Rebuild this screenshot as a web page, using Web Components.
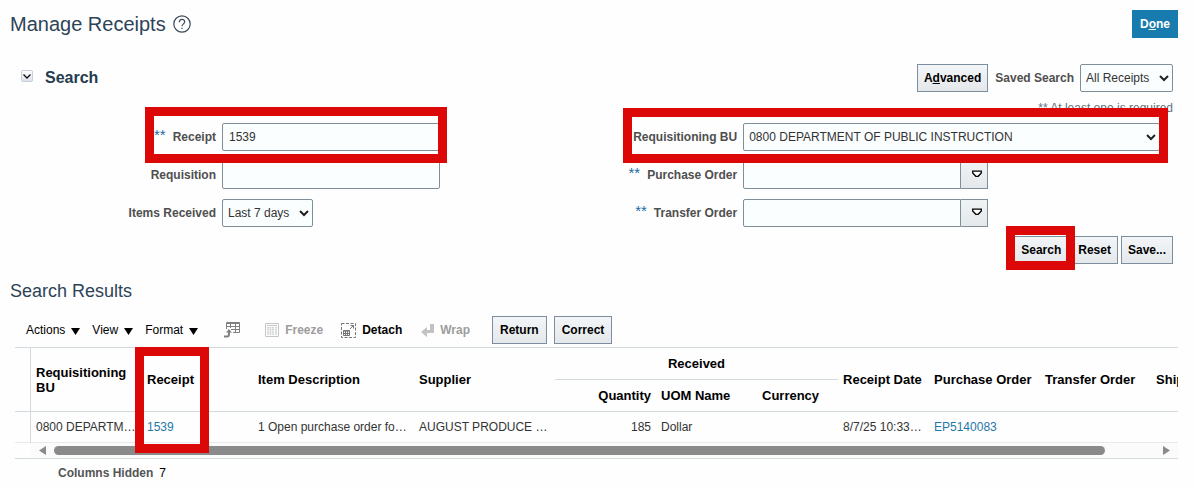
<!DOCTYPE html>
<html lang="en">
<head>
	<meta charset="utf-8">
	<meta name="viewport" content="width=device-width, initial-scale=1">
	<title>Manage Receipts</title>
	<style>
		body {
			margin: 0;
			background: #fefefe;
			color: #333;
			font: 12px/16px "Liberation Sans", Arial, sans-serif;
		}
	</style>
</head>
<body>
	<receipts-page></receipts-page>

	<script>
		class BaseElement extends HTMLElement {

			constructor() {
				super();
				this.attachShadow({mode: 'open'});
			};

			connectedCallback() {
				this.shadowRoot.innerHTML = `
					<style>
						* {
							box-sizing: border-box;
						}

						svg {
							display: block;
							flex: none;
						}

						${this.style()}
					</style>
					${this.render()}
				`;
			};

			attr(name) {
				return this.getAttribute(name) || '';
			};
		};

		// Red frame drawn over whatever is slotted in
		class HighlightBox extends BaseElement {

			style() {
				return `
					:host {
						display: block;
						position: relative;
					}

					div {
						position: absolute;
						inset: var(--frame, -8px);
						border: 9px solid #dc0808;
						pointer-events: none;
						z-index: 2;
					}
				`;
			};

			render() {
				return `<slot></slot><div></div>`;
			};
		};

		class ActionButton extends BaseElement {

			style() {
				return `
					:host {
						display: block;
						--pad: 6px;
					}

					:host([wide]) {
						--pad: 7px;
					}

					button {
						display: block;
						height: 28px;
						padding: 0 var(--pad);
						border: 1px solid #7b8fa0;
						border-radius: 0;
						background: linear-gradient(#f3f5f7, #e4e8ea);
						color: #000;
						font: bold 12px/16px "Liberation Sans", Arial, sans-serif;
						white-space: nowrap;
					}

					:host([primary]) button {
						border-color: #177cad;
						background: #177cad;
						color: #fff;
					}
				`;
			};

			render() {
				return `<button type="button"><slot></slot></button>`;
			};
		};

		class FormField extends BaseElement {

			style() {
				return `
					:host {
						display: flex;
						align-items: center;
						gap: 6px;
					}

					label {
						display: flex;
						align-items: flex-start;
						justify-content: flex-end;
						gap: 7px;
						flex: none;
						width: var(--label-width, auto);
						color: #4f4f4f;
						font-weight: bold;
						white-space: nowrap;
					}

					label span {
						color: #1d6ca3;
						font-size: 15px;
						font-weight: normal;
						line-height: 12px;
					}

					input,
					select {
						height: 28px;
						margin: 0;
						padding: 0 6px;
						border: 1px solid #7f8f9a;
						border-radius: 2px;
						background: #fbfeff;
						color: #333;
						font: 12px/16px "Liberation Sans", Arial, sans-serif;
					}

					input {
						width: 218px;
					}

					.select {
						display: grid;
						align-items: center;
					}

					:host([stretch]) .select {
						flex: 1;
					}

					.select > * {
						grid-area: 1 / 1;
					}

					select {
						appearance: none;
						width: 100%;
						padding: 0 22px 0 5px;
					}

					.select svg {
						justify-self: end;
						margin-right: 4px;
						pointer-events: none;
					}

					.combo {
						display: flex;
					}

					.combo input {
						border-radius: 2px 0 0 2px;
					}

					.combo button {
						display: grid;
						place-items: center;
						width: 27px;
						height: 28px;
						padding: 0 0 2px 5px;
						border: 1px solid #7f8f9a;
						border-left: 0;
						background: linear-gradient(#f0f3f4, #e4e8ea);
					}
				`;
			};

			render() {
				const mark = this.hasAttribute('marked') ? '<span>**</span>' : '';
				return `
					<label for="control">${mark}${this.attr('label')}</label>
					${this.control()}
				`;
			};
		};

		class TextField extends FormField {

			control() {
				return `<input id="control" type="text" value="${this.attr('value')}">`;
			};
		};

		class SelectField extends FormField {

			control() {
				return `
					<div class="select">
						<select id="control"><option>${this.attr('value')}</option></select>
						<svg width="10" height="8" viewBox="0 0 10 8" fill="none" stroke="#222" stroke-width="2">
							<path d="M1 2l4 4 4-4"/>
						</svg>
					</div>
				`;
			};
		};

		class ComboField extends FormField {

			control() {
				return `
					<div class="combo">
						<input id="control" type="text">
						<button type="button" aria-label="Search: ${this.attr('label')}">
							<svg width="10" height="8" viewBox="0 0 10 8" fill="#fff" stroke="#000" stroke-width="1.3">
								<path d="M.7 1.200h8.600v1.800L6.200 6.300H3.800L.7 3z"/>
							</svg>
						</button>
					</div>
				`;
			};
		};

		class SearchPanel extends BaseElement {

			style() {
				return `
					:host {
						display: block;
						padding-right: 5px;
					}

					header,
					footer {
						display: flex;
						align-items: center;
					}

					h2 {
						flex: 1;
						margin: 0;
						color: #253b4e;
						font-size: 16px;
						line-height: 20px;
					}

					.toggle {
						display: grid;
						place-items: center;
						width: 12px;
						height: 12px;
						margin: 0 12px 4px 11px;
						padding: 0;
						border: 1px solid #c9ced8;
						border-radius: 2px;
						background: linear-gradient(#fff, #dde1ea);
					}

					header action-button {
						margin-right: 7px;
					}

					p {
						margin: 8px 0 7px;
						color: #61707e;
						text-align: right;
					}

					.fields {
						display: grid;
						grid-template-columns: 11fr 10fr;
					}

					.column {
						display: grid;
						gap: 10px;
						align-content: start;
					}

					.left {
						--label-width: 206px;
						justify-items: start;
					}

					.right {
						--label-width: 118px;
					}

					.receipt {
						--frame: -16px -7px -12px 135px;
					}

					.unit {
						--frame: -15px -8px -12px 4px;
						margin-right: 13px;
					}

					.submit {
						--frame: -10px -7px -6px -8px;
					}

					footer {
						justify-content: flex-end;
						gap: 3px;
						margin-top: 9px;
					}
				`;
			};

			render() {
				return `
					<header>
						<button class="toggle" type="button" aria-label="Collapse Search">
							<svg width="10" height="10" viewBox="0 0 10 10" fill="none" stroke="#111" stroke-width="1.3">
								<path d="M1.500 3.500L5 7l3.500-3.500"/>
							</svg>
						</button>
						<h2>Search</h2>
						<action-button>A<u>d</u>vanced</action-button>
						<select-field label="Saved Search" value="All Receipts"></select-field>
					</header>
					<p>** At least one is required</p>
					<div class="fields">
						<div class="column left">
							<highlight-box class="receipt">
								<text-field marked label="Receipt" value="1539"></text-field>
							</highlight-box>
							<text-field label="Requisition"></text-field>
							<select-field label="Items Received" value="Last 7 days"></select-field>
						</div>
						<div class="column right">
							<highlight-box class="unit">
								<select-field stretch label="Requisitioning BU" value="0800 DEPARTMENT OF PUBLIC INSTRUCTION"></select-field>
							</highlight-box>
							<combo-field marked label="Purchase Order"></combo-field>
							<combo-field marked label="Transfer Order"></combo-field>
						</div>
					</div>
					<footer>
						<highlight-box class="submit">
							<action-button>Search</action-button>
						</highlight-box>
						<action-button>Reset</action-button>
						<action-button>Save...</action-button>
					</footer>
				`;
			};
		};

		class ResultToolbar extends BaseElement {

			style() {
				return `
					:host {
						display: flex;
						align-items: center;
						padding-left: 16px;
					}

					button {
						display: flex;
						align-items: center;
						gap: 6px;
						padding: 0;
						border: 0;
						background: none;
						color: #000;
						font: 12px/16px "Liberation Sans", Arial, sans-serif;
					}

					.menu {
						margin-right: 12px;
					}

					.menu svg {
						margin-top: 2px;
					}

					.export {
						margin: 0 25px 0 14px;
					}

					.tool {
						margin-right: 18px;
						font-weight: bold;
					}

					.tool:disabled {
						color: #9d9d9d;
					}

					action-button {
						margin: 0 3px 0 4px;
					}
				`;
			};

			menu(name) {
				return `
					<button class="menu" type="button">
						${name}
						<svg width="9" height="7" viewBox="0 0 9 7"><path d="M0 0h9L4.5 7z"/></svg>
					</button>
				`;
			};

			render() {
				return `
					${['Actions', 'View', 'Format'].map(name => this.menu(name)).join('')}
					<button class="export" type="button" aria-label="Export to Excel">
						<svg width="16" height="16" viewBox="0 0 16 16" fill="none" stroke="#808080">
							<path d="M2.500 7V.5h13v10H9M2 1.500h14M2.500 4.500h13M7 7.500h8.500M6.500 1v5M11.500 1v9.500"/>
							<path d="M0 14.500h3c1.500 0 2-1 2-2.500v-2" stroke-width="2"/>
							<path d="M2 10.500l3-3.500 3 3.500z" fill="#808080" stroke="none"/>
						</svg>
					</button>
					<button class="tool" type="button" disabled>
						<svg width="14" height="14" viewBox="0 0 14 14" fill="none" stroke="#c6c6c6">
							<path d="M.5.5h13v13H.5zM2 2.500h10"/>
							<path d="M3 4v8M5.500 4v8M8 4v8M11 4v8" stroke-width="1.500" stroke-dasharray="1.500 .6"/>
						</svg>
						Freeze
					</button>
					<button class="tool" type="button">
						<svg width="15" height="15" viewBox="0 0 15 15" fill="none" stroke="#777">
							<path d="M.5.5h14v14H.5z" stroke-dasharray="3 1.500"/>
							<path d="M2.500 7.500h6v5h-6zM2 8h7M2.500 10.500h6M4.500 8v5M6.500 8v5"/>
							<path d="M9 6l3.500-3.500M9.500 2.500h3v3"/>
						</svg>
						Detach
					</button>
					<button class="tool" type="button" disabled>
						<svg width="14" height="14" viewBox="0 0 14 14" fill="#c2c2c2">
							<path d="M1 9l6-5v3h3V1h4v9H7v4z"/>
						</svg>
						Wrap
					</button>
					<action-button wide>Return</action-button>
					<action-button wide>Correct</action-button>
				`;
			};
		};

		class ResultTable extends BaseElement {

			style() {
				return `
					:host {
						display: block;
						margin-left: 5px;
						border-top: 1px solid #d3dadd;
						border-bottom: 1px solid #d3dadd;
					}

					.viewport {
						overflow-x: clip;
						overflow-y: visible;
					}

					table {
						width: 1248px;
						border-collapse: separate;
						border-spacing: 0;
						table-layout: fixed;
					}

					th,
					td {
						padding: 0 5px;
						text-align: left;
						white-space: nowrap;
					}

					th {
						height: 32px;
						border-bottom: 1px solid #d3dadd;
						color: #000;
						font-size: 13px;
						line-height: 15px;
					}

					td {
						height: 31px;
						border-bottom: 1px solid #e6eaec;
					}

					.handle {
						border-right: 1px solid #d3dadd;
					}

					.wrap {
						white-space: normal;
					}

					.group {
						text-align: center;
					}

					.number {
						text-align: right;
					}

					a {
						color: #1f78a8;
						text-decoration: none;
					}

					/* runs from the header down over the first row */
					.column {
						--frame: -25px 39px -66px -12px;
					}

					.scroll {
						display: flex;
						align-items: center;
						gap: 8px;
						height: 15px;
						margin-left: 16px;
						padding: 0 8px;
						background: #fbfbfb;
					}

					.track {
						flex: 1;
					}

					.thumb {
						width: 95.5%;
						height: 9px;
						border-radius: 5px;
						background: #8a8a8a;
					}
				`;
			};

			render() {
				const widths = [16, 111, 111, 161, 141, 101, 101, 81, 91, 111, 111, 112];
				return `
					<div class="viewport">
						<table>
							<colgroup>${widths.map(width => `<col style="width: ${width}px">`).join('')}</colgroup>
							<thead>
								<tr>
									<th class="handle" rowspan="2"></th>
									<th class="wrap" rowspan="2">Requisitioning BU</th>
									<th rowspan="2"><highlight-box class="column">Receipt</highlight-box></th>
									<th rowspan="2">Item Description</th>
									<th rowspan="2">Supplier</th>
									<th class="group" colspan="3">Received</th>
									<th rowspan="2">Receipt Date</th>
									<th rowspan="2">Purchase Order</th>
									<th rowspan="2">Transfer Order</th>
									<th rowspan="2">Ship</th>
								</tr>
								<tr>
									<th class="number">Quantity</th>
									<th>UOM Name</th>
									<th>Currency</th>
								</tr>
							</thead>
							<tbody>
								<tr>
									<td class="handle"></td>
									<td>0800 DEPARTM…</td>
									<td><a href="#receipt">1539</a></td>
									<td>1 Open purchase order fo…</td>
									<td>AUGUST PRODUCE …</td>
									<td class="number">185</td>
									<td>Dollar</td>
									<td></td>
									<td>8/7/25 10:33…</td>
									<td><a href="#order">EP5140083</a></td>
									<td></td>
									<td></td>
								</tr>
							</tbody>
						</table>
					</div>
					<div class="scroll">
						<svg width="7" height="9" viewBox="0 0 7 9" fill="#8a8a8a"><path d="M7 0v9L0 4.500z"/></svg>
						<div class="track"><div class="thumb"></div></div>
						<svg width="7" height="9" viewBox="0 0 7 9" fill="#8a8a8a"><path d="M0 0v9l7-4.500z"/></svg>
					</div>
				`;
			};
		};

		class ReceiptsPage extends BaseElement {

			style() {
				return `
					:host {
						display: block;
						padding: 10px 16px 8px 10px;
					}

					header {
						display: flex;
						align-items: center;
						justify-content: space-between;
						margin-bottom: 26px;
					}

					h1,
					h2 {
						margin: 0;
						color: #2d4358;
						font-weight: normal;
					}

					h1 {
						display: flex;
						align-items: center;
						gap: 7px;
						font-size: 20px;
						line-height: 24px;
					}

					h2 {
						margin: 15px 0 13px;
						font-size: 18px;
						line-height: 24px;
					}

					result-toolbar {
						margin-bottom: 3px;
					}

					.hidden {
						display: flex;
						gap: 6px;
						margin: 6px 0 0 48px;
						color: #000;
					}

					.hidden b {
						color: #555;
					}
				`;
			};

			render() {
				return `
					<header>
						<h1>
							Manage Receipts
							<svg width="18" height="18" viewBox="0 0 18 18" fill="none" stroke="#3c4a58" stroke-width="1.200">
								<circle cx="9" cy="9" r="8.200"/>
								<path d="M6.300 7.200c0-3.700 5.400-3.600 5.400-.4C11.700 8.800 9 9 9 11.300M9 12.700v1.400"/>
							</svg>
						</h1>
						<action-button primary wide>D<u>o</u>ne</action-button>
					</header>
					<search-panel></search-panel>
					<h2>Search Results</h2>
					<result-toolbar></result-toolbar>
					<result-table></result-table>
					<div class="hidden"><b>Columns Hidden</b><span>7</span></div>
				`;
			};
		};

		customElements.define('highlight-box', HighlightBox);
		customElements.define('action-button', ActionButton);
		customElements.define('text-field', TextField);
		customElements.define('select-field', SelectField);
		customElements.define('combo-field', ComboField);
		customElements.define('search-panel', SearchPanel);
		customElements.define('result-toolbar', ResultToolbar);
		customElements.define('result-table', ResultTable);
		customElements.define('receipts-page', ReceiptsPage);
	</script>
</body>
</html>
